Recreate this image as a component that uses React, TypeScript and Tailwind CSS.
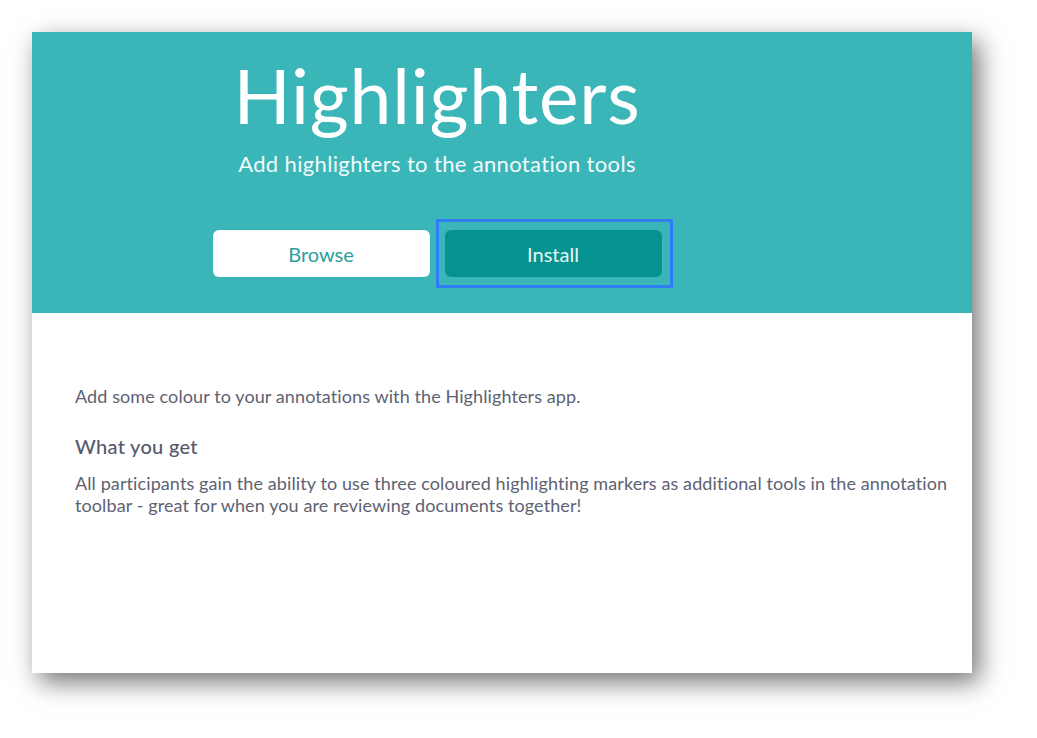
import React from "react";

export default function App() {
  return (
    <div
      className="w-[1037px] h-[738px] bg-white overflow-hidden pt-[32px] pl-[32px]"
      style={{ fontFamily: "Lato, 'Open Sans', sans-serif" }}
    >
      {/* Card */}
      <div className="w-[940px] h-[641px] bg-white flex flex-col shadow-[7px_9px_24px_rgba(0,0,0,0.55)]">
        {/* Header */}
        <header className="bg-[#3bb6b8] h-[281px] flex flex-col items-center pr-[130px] pt-[26px]">
          <h1 className="text-[75px] leading-none text-white font-normal tracking-[0.8px]">
            Highlighters
          </h1>
          <p className="mt-[20px] text-[22px] leading-none text-[#f2fbfb] tracking-[0.35px]">
            Add highlighters to the annotation tools
          </p>
          <div className="mt-[55px] flex gap-[15px]">
            <button className="w-[217px] h-[47px] rounded-[6px] bg-white text-[#2aa19e] text-[20px]">
              Browse
            </button>
            {/* focus ring */}
            <div className="-ml-[9px] -mt-[11px] -mr-[11px] -mb-[11px] border-[3px] border-[#2f7df6] pl-[6px] pr-[8px] pt-[8px] pb-[8px]">
              <button className="block w-[217px] h-[47px] rounded-[6px] bg-[#06938f] text-[#e8f6f5] text-[20px]">
                Install
              </button>
            </div>
          </div>
        </header>

        {/* Body */}
        <main className="pt-[71px] pl-[43px] pr-[24px] text-[#5d6272]">
          <p className="text-[18px] leading-[24px] tracking-[0.1px]">
            Add some colour to your annotations with the Highlighters app.
          </p>
          <h2 className="mt-[26px] text-[20px] leading-[24px] font-medium text-[#555a6a] tracking-[0.3px]">
            What you get
          </h2>
          <p className="mt-[14px] text-[18px] leading-[22px] tracking-[0.1px]">
            All participants gain the ability to use three coloured highlighting markers as additional tools in the annotation toolbar - great for when you are reviewing documents together!
          </p>
        </main>
      </div>
    </div>
  );
}
